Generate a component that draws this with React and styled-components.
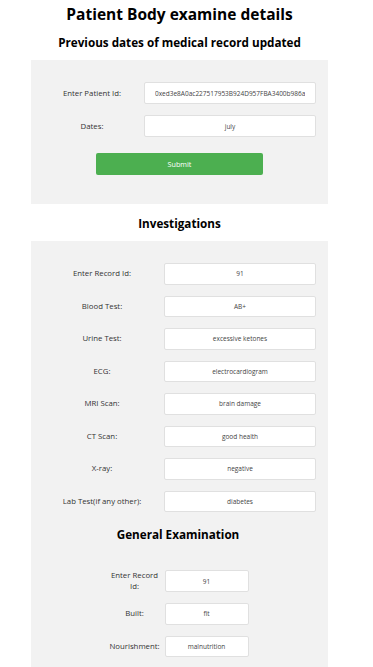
import React from 'react'
import styled, { createGlobalStyle } from 'styled-components'

const Global = createGlobalStyle`
  body {
    margin: 0;
    background: #ffffff;
    font-family: 'Open Sans', 'Noto Sans', sans-serif;
    color: #222;
  }
`

const Page = styled.div`
  width: 359px;
  padding: 4px 0 40px;
`

const Title = styled.h1`
  margin: 0;
  text-align: center;
  font-size: 15.5px;
  line-height: 20px;
  font-weight: 700;
  color: #000;
`

const Heading = styled.h2`
  margin: ${(p) => p.$margin || '0'};
  text-align: center;
  font-size: 11.7px;
  line-height: 18px;
  font-weight: 700;
  color: #000;
`

const Panel = styled.div`
  margin: 0 auto;
  width: 297px;
  box-sizing: border-box;
  background: #f2f2f2;
  padding: ${(p) => p.$padding || '22px 12px 29px 9px'};
`

const Form = styled.div`
  display: grid;
  grid-template-columns: ${(p) => p.$cols};
  justify-content: ${(p) => p.$justify || 'start'};
  column-gap: ${(p) => p.$gap || '0'};
  row-gap: ${(p) => p.$rowGap || '11px'};
  align-items: center;
`

const Label = styled.label`
  text-align: center;
  font-size: 7.8px;
  line-height: 11px;
  color: #333;
`

const Field = styled.input`
  box-sizing: border-box;
  width: 100%;
  height: ${(p) => p.$h || '22px'};
  border: 1px solid #e0e0e0;
  border-radius: 2px;
  background: #fff;
  text-align: center;
  font-family: inherit;
  font-size: 6.5px;
  color: #444;
  padding: 0 10px;
  outline: none;
`

const SubmitButton = styled.button`
  display: block;
  margin: 16px 0 0 56px;
  width: 167px;
  height: 22px;
  border: none;
  border-radius: 2px;
  background: #4caf50;
  color: #fff;
  font-family: inherit;
  font-size: 7.2px;
`

const investigations = [
  ['Enter Record Id:', '91'],
  ['Blood Test:', 'AB+'],
  ['Urine Test:', 'excessive ketones'],
  ['ECG:', 'electrocardiogram'],
  ['MRI Scan:', 'brain damage'],
  ['CT Scan:', 'good health'],
  ['X-ray:', 'negative'],
  ['Lab Test(if any other):', 'diabetes'],
]

const general = [
  ['Enter Record Id:', '91'],
  ['Built:', 'fit'],
  ['Nourishment:', 'malnutrition'],
  ['Pallor:', 'absent'],
  ['Icterus:', 'absent'],
]

const Row = ({ label, value, h }) => (
  <>
    <Label>{label}</Label>
    <Field readOnly defaultValue={value} $h={h} />
  </>
)

const App = () => (
  <Page>
    <Global />
    <Title>Patient Body examine details</Title>
    <Heading $margin="9px 0 9px">Previous dates of medical record updated</Heading>
    <Panel $padding="22px 12px 29px 9px">
      <Form $cols="104px 172px">
        <Row label="Enter Patient Id:" value="0xed3e8A0ac227517953B924D957FBA3400b986aE2" />
        <Row label="Dates:" value="july" />
      </Form>
      <SubmitButton>Submit</SubmitButton>
    </Panel>
    <Heading $margin="10px 0 9px">Investigations</Heading>
    <Panel $padding="22px 12px 40px 9px">
      <Form $cols="124px 152px" $rowGap="11px">
        {investigations.map(([l, v]) => (
          <Row key={l} label={l} value={v} h="21.5px" />
        ))}
      </Form>
      <Heading $margin="13px 0 27px">General Examination</Heading>
      <Form $cols="54px 84px" $gap="3px" $justify="center" $rowGap="11px">
        {general.map(([l, v]) => (
          <Row key={l} label={l} value={v} h="21.5px" />
        ))}
      </Form>
    </Panel>
  </Page>
)

export default App
